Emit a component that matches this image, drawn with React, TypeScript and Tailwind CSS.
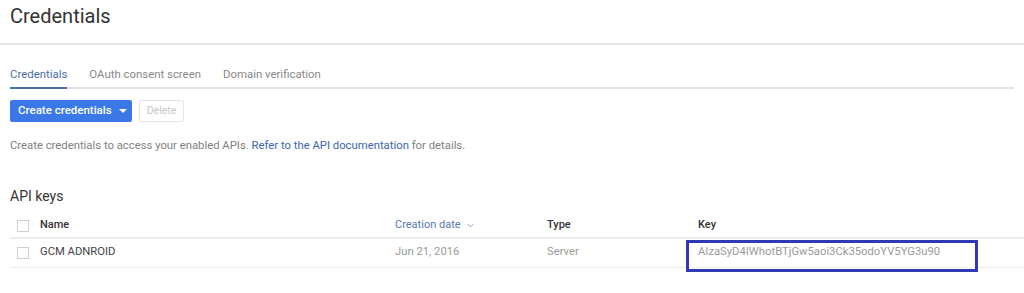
import { ChevronDown } from "lucide-react";

function Checkbox() {
  return <div className="w-[12px] h-[12px] border border-[#cfcfcf] bg-white" />;
}

export default function App() {
  return (
    <div className="w-[1024px] h-[293px] bg-white overflow-hidden font-['Roboto',sans-serif]">
      <div className="h-[45px] border-b-2 border-[#e6e6e6] px-[10px] pt-[2px]">
        <h1 className="text-[20px] text-[#333] leading-[28px]">Credentials</h1>
      </div>

      <div className="mx-[10px] mt-[21px] flex gap-[22px] border-b-2 border-[#e3e3e3] text-[11.4px]">
        <div className="pb-[4px] text-[#4a6fa8] border-b-2 border-[#4a6fa8] -mb-[2px]">Credentials</div>
        <div className="pb-[4px] text-[#888]">OAuth consent screen</div>
        <div className="pb-[4px] text-[#888]">Domain verification</div>
      </div>

      <div className="mx-[10px] mt-[11px] flex gap-[7px]">
        <button className="h-[22px] w-[122px] pl-[8px] rounded-[2px] bg-[#3b78e7] text-white text-[11.5px] font-medium flex items-center gap-[7px]">
          Create credentials
          <span className="w-0 h-0 border-l-[4px] border-r-[4px] border-t-[4px] border-l-transparent border-r-transparent border-t-white" />
        </button>
        <button className="h-[22px] w-[45px] rounded-[2px] border border-[#e4e4e4] text-[#c6c6c6] text-[10.5px]">Delete</button>
      </div>

      <p className="mx-[10px] mt-[16px] text-[11.3px] text-[#808080]">
        Create credentials to access your enabled APIs. <span className="text-[#3b64b0]">Refer to the API documentation</span> for details.
      </p>

      <h2 className="mx-[10px] mt-[31px] text-[14px] text-[#333]">API keys</h2>

      <div className="ml-[10px] mt-[6px] text-[11px]">
        <div className="h-[26px] pt-[1px] flex items-center border-b-2 border-[#ececec]">
          <div className="w-[30px] pl-[7px]"><Checkbox /></div>
          <div className="w-[355px] font-medium text-[#333]">Name</div>
          <div className="w-[152px] text-[#5679b5] flex items-center gap-[4px]">
            Creation date <ChevronDown size={11} strokeWidth={2} className="text-[#8aa0c8]" />
          </div>
          <div className="w-[151px] font-medium text-[#333]">Type</div>
          <div className="font-medium text-[#333]">Key</div>
        </div>
        <div className="relative h-[29px] pb-[1px] flex items-center border-b border-[#ececec] text-[11.25px]">
          <div className="w-[30px] pl-[7px]"><Checkbox /></div>
          <div className="w-[355px] text-[#444]">GCM ADNROID</div>
          <div className="w-[152px] text-[#9a9a9a]">Jun 21, 2016</div>
          <div className="w-[151px] text-[#9a9a9a]">Server</div>
          <div className="text-[#9a9a9a]">AIzaSyD4IWhotBTjGw5aoi3Ck35odoYV5YG3u90</div>
          <div className="absolute left-[676px] top-[1px] w-[292px] h-[32px] border-[3px] border-[#3238b4]" />
        </div>
      </div>
    </div>
  );
}
